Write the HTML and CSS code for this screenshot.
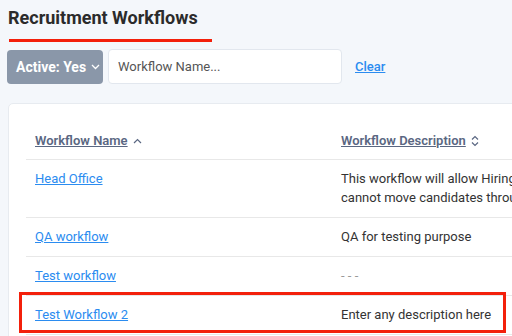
FILE: index.html
```html
<!DOCTYPE html>
<html lang="en">
<head>
    <meta charset="UTF-8">
    <meta name="viewport" content="width=device-width, initial-scale=1.0">
    <title>Recruitment Workflows</title>
    <link rel="stylesheet" href="styles.css">
</head>
<body>
    <div class="page">
        <h1 class="title">Recruitment Workflows</h1>
        <div class="title-bar"></div>

        <div class="toolbar">
            <button class="filter-btn" type="button">
                Active: Yes
                <svg width="9" height="6" viewBox="0 0 9 6"><path d="M1 1l3.5 3.5L8 1" fill="none" stroke="#fff" stroke-width="1.3"/></svg>
            </button>
            <input class="search" type="text" placeholder="Workflow Name...">
            <a href="#" class="clear">Clear</a>
        </div>

        <div class="card">
            <table class="wf-table">
                <thead>
                    <tr>
                        <th class="col-name">
                            <a href="#">Workflow Name</a>
                            <svg class="sort" width="9" height="6" viewBox="0 0 9 6"><path d="M1 5l3.5-3.5L8 5" fill="none" stroke="#5a6782" stroke-width="1.2"/></svg>
                        </th>
                        <th>
                            <a href="#">Workflow Description</a>
                            <svg class="sort" width="8" height="12" viewBox="0 0 8 12"><path d="M1 4.5l3-3 3 3M1 7.5l3 3 3-3" fill="none" stroke="#5a6782" stroke-width="1.2"/></svg>
                        </th>
                    </tr>
                </thead>
                <tbody>
                    <tr>
                        <td><a href="#">Head Office</a></td>
                        <td>This workflow will allow Hiring Managers to view candidates but they<br>cannot move candidates through the stages of the workflow</td>
                    </tr>
                    <tr>
                        <td><a href="#">QA workflow</a></td>
                        <td>QA for testing purpose</td>
                    </tr>
                    <tr>
                        <td><a href="#">Test workflow</a></td>
                        <td class="empty">- - -</td>
                    </tr>
                    <tr class="marked">
                        <td><a href="#">Test Workflow 2</a></td>
                        <td>Enter any description here</td>
                    </tr>
                </tbody>
            </table>
            <div class="highlight"></div>
        </div>
    </div>
</body>
</html>
```

FILE: styles.css
```css
html, body {
    margin: 0;
    overflow: hidden;
}

body {
    background: #f4f7fb;
    font-family: Roboto, "Liberation Sans", sans-serif;
    font-size: 13px;
    color: #333;
    width: 512px;
    height: 336px;
}

.page {
    padding: 6px 0 0 8px;
}

.title {
    margin: 0;
    font-size: 18px;
    line-height: 24px;
    font-weight: 700;
    color: #2b2b2b;
}

.title-bar {
    width: 203px;
    height: 3px;
    margin: 9px 0 0 1px;
    background: #f3200b;
}

.toolbar {
    display: flex;
    align-items: flex-end;
    margin: 7px 0 0 -1px;
}

.filter-btn {
    display: flex;
    align-items: center;
    gap: 5px;
    width: 96px;
    height: 34px;
    padding: 0 0 0 9px;
    border: none;
    border-radius: 4px;
    background: #8a97a9;
    color: #fff;
    font-family: inherit;
    font-size: 14px;
    font-weight: 700;
}

.search {
    box-sizing: border-box;
    width: 234px;
    height: 35px;
    margin-left: 5px;
    padding: 0 9px;
    border: 1px solid #e2e7ee;
    border-radius: 4px;
    background: #fff;
    font-family: inherit;
    font-size: 13px;
    color: #333;
}

.search::placeholder {
    color: #555;
}

.clear {
    margin: 0 0 10px 13px;
    color: #2b8cf0;
    font-weight: 500;
    line-height: 15px;
}

.card {
    position: relative;
    width: 700px;
    height: 300px;
    margin-top: 19px;
    padding: 17px 0 0 17px;
    background: #fff;
    border: 1px solid #e7ebf0;
    border-radius: 5px;
}

.wf-table {
    border-collapse: collapse;
    table-layout: fixed;
    width: 680px;
}

.wf-table th {
    height: 38px;
    padding: 0 9px;
    text-align: left;
    font-weight: 600;
    white-space: nowrap;
    border-bottom: 1px solid #e8e8e8;
}

.wf-table th a {
    color: #5a6782;
}

.wf-table .col-name {
    width: 288px;
}

.sort {
    margin-left: 2px;
    vertical-align: middle;
}

.wf-table td {
    padding: 9px 9px 10px;
    line-height: 19px;
    white-space: nowrap;
    vertical-align: top;
    border-bottom: 1px solid #e8e8e8;
}

.wf-table td a {
    color: #2b8cf0;
}

.wf-table .empty {
    color: #999;
}

.highlight {
    position: absolute;
    left: 10px;
    top: 188px;
    width: 481px;
    height: 35px;
    border: 3px solid #f3200b;
}
```
